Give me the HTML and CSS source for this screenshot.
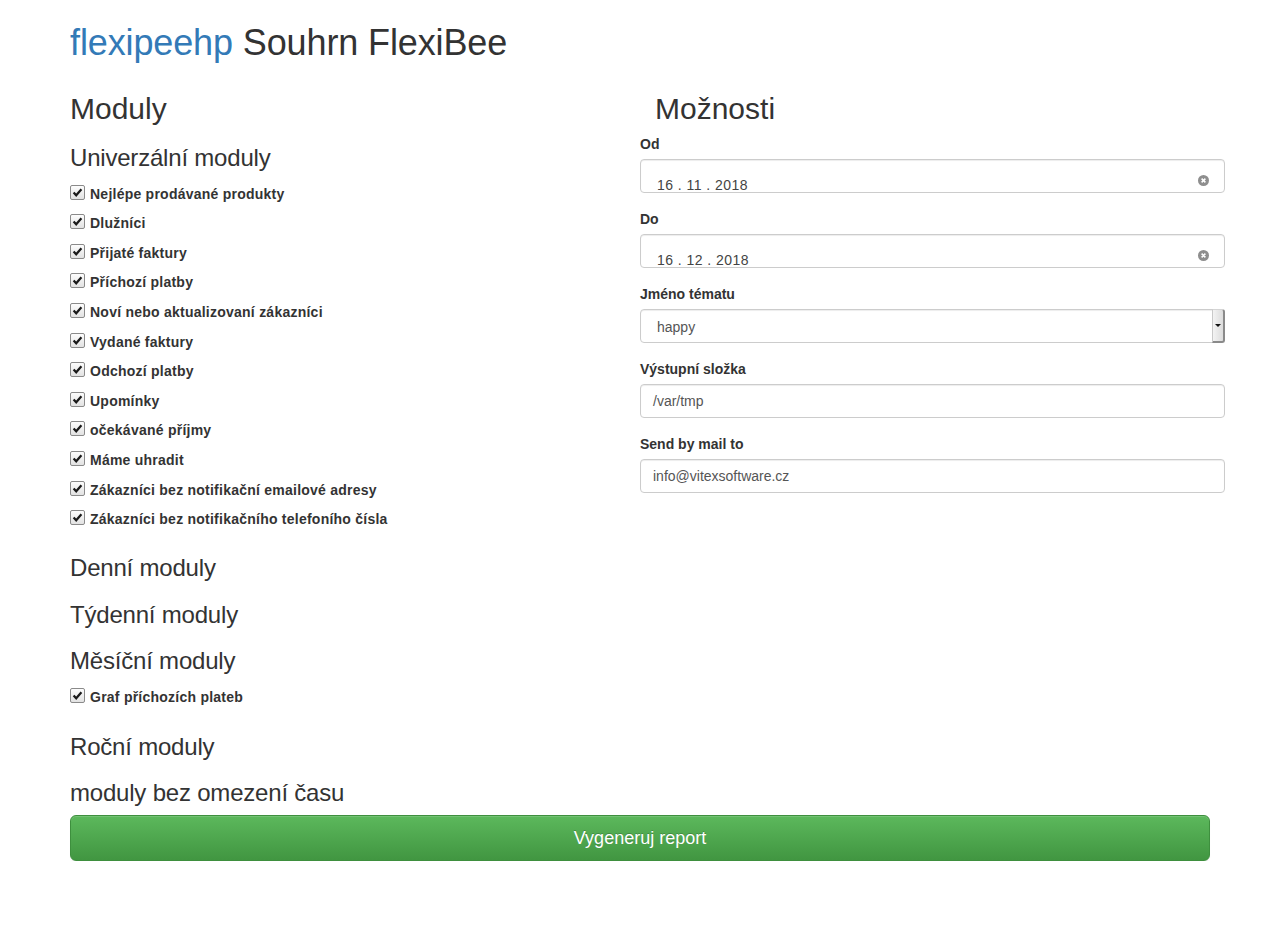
FILE: index.html
```html
<!DOCTYPE html>
<html lang="cs">
<head>
<meta charset="utf-8">
<title>flexipeehp Souhrn FlexiBee</title>
<link rel="stylesheet" href="styles.css">
</head>
<body>
<div class="container">
  <h1 class="title"><span class="brand">flexipeehp</span> Souhrn FlexiBee</h1>
  <div class="row">
    <div class="col">
      <h2>Moduly</h2>
      <h3>Univerzální moduly</h3>
      <div class="mods mods-main">
        <div class="mod"><span class="cb"><svg viewBox="0 0 13 13" width="13" height="13"><path d="M2.6 6.4 L5.2 9.3 L10.4 3.2" fill="none" stroke="#1a1a1a" stroke-width="2.2"/></svg></span><span class="lbl">Nejlépe prodávané produkty</span></div>
        <div class="mod"><span class="cb"><svg viewBox="0 0 13 13" width="13" height="13"><path d="M2.6 6.4 L5.2 9.3 L10.4 3.2" fill="none" stroke="#1a1a1a" stroke-width="2.2"/></svg></span><span class="lbl">Dlužníci</span></div>
        <div class="mod"><span class="cb"><svg viewBox="0 0 13 13" width="13" height="13"><path d="M2.6 6.4 L5.2 9.3 L10.4 3.2" fill="none" stroke="#1a1a1a" stroke-width="2.2"/></svg></span><span class="lbl">Přijaté faktury</span></div>
        <div class="mod"><span class="cb"><svg viewBox="0 0 13 13" width="13" height="13"><path d="M2.6 6.4 L5.2 9.3 L10.4 3.2" fill="none" stroke="#1a1a1a" stroke-width="2.2"/></svg></span><span class="lbl">Příchozí platby</span></div>
        <div class="mod"><span class="cb"><svg viewBox="0 0 13 13" width="13" height="13"><path d="M2.6 6.4 L5.2 9.3 L10.4 3.2" fill="none" stroke="#1a1a1a" stroke-width="2.2"/></svg></span><span class="lbl">Noví nebo aktualizovaní zákazníci</span></div>
        <div class="mod"><span class="cb"><svg viewBox="0 0 13 13" width="13" height="13"><path d="M2.6 6.4 L5.2 9.3 L10.4 3.2" fill="none" stroke="#1a1a1a" stroke-width="2.2"/></svg></span><span class="lbl">Vydané faktury</span></div>
        <div class="mod"><span class="cb"><svg viewBox="0 0 13 13" width="13" height="13"><path d="M2.6 6.4 L5.2 9.3 L10.4 3.2" fill="none" stroke="#1a1a1a" stroke-width="2.2"/></svg></span><span class="lbl">Odchozí platby</span></div>
        <div class="mod"><span class="cb"><svg viewBox="0 0 13 13" width="13" height="13"><path d="M2.6 6.4 L5.2 9.3 L10.4 3.2" fill="none" stroke="#1a1a1a" stroke-width="2.2"/></svg></span><span class="lbl">Upomínky</span></div>
        <div class="mod"><span class="cb"><svg viewBox="0 0 13 13" width="13" height="13"><path d="M2.6 6.4 L5.2 9.3 L10.4 3.2" fill="none" stroke="#1a1a1a" stroke-width="2.2"/></svg></span><span class="lbl">očekávané příjmy</span></div>
        <div class="mod"><span class="cb"><svg viewBox="0 0 13 13" width="13" height="13"><path d="M2.6 6.4 L5.2 9.3 L10.4 3.2" fill="none" stroke="#1a1a1a" stroke-width="2.2"/></svg></span><span class="lbl">Máme uhradit</span></div>
        <div class="mod"><span class="cb"><svg viewBox="0 0 13 13" width="13" height="13"><path d="M2.6 6.4 L5.2 9.3 L10.4 3.2" fill="none" stroke="#1a1a1a" stroke-width="2.2"/></svg></span><span class="lbl">Zákazníci bez notifikační emailové adresy</span></div>
        <div class="mod"><span class="cb"><svg viewBox="0 0 13 13" width="13" height="13"><path d="M2.6 6.4 L5.2 9.3 L10.4 3.2" fill="none" stroke="#1a1a1a" stroke-width="2.2"/></svg></span><span class="lbl">Zákazníci bez notifikačního telefoního čísla</span></div>
      </div>
      <h3>Denní moduly</h3>
      <h3>Týdenní moduly</h3>
      <h3>Měsíční moduly</h3>
      <div class="mods">
        <div class="mod mod-tight"><span class="cb"><svg viewBox="0 0 13 13" width="13" height="13"><path d="M2.6 6.4 L5.2 9.3 L10.4 3.2" fill="none" stroke="#1a1a1a" stroke-width="2.2"/></svg></span><span class="lbl">Graf příchozích plateb</span></div>
      </div>
      <h3>Roční moduly</h3>
      <h3 class="tail">moduly bez omezení času</h3>
    </div>
    <div class="col">
      <h2>Možnosti</h2>
      <form class="opts">
        <div class="form-group">
          <label>Od</label>
          <div class="form-control date"><span class="dval">16 . 11 . 2018</span><svg class="clear" viewBox="0 0 11 11" width="11" height="11"><circle cx="5.5" cy="5.5" r="5.5" fill="#8e8e8e"/><path d="M3.6 3.6 L7.4 7.4 M7.4 3.6 L3.6 7.4" stroke="#fff" stroke-width="1.5"/></svg></div>
        </div>
        <div class="form-group">
          <label>Do</label>
          <div class="form-control date"><span class="dval">16 . 12 . 2018</span><svg class="clear" viewBox="0 0 11 11" width="11" height="11"><circle cx="5.5" cy="5.5" r="5.5" fill="#8e8e8e"/><path d="M3.6 3.6 L7.4 7.4 M7.4 3.6 L3.6 7.4" stroke="#fff" stroke-width="1.5"/></svg></div>
        </div>
        <div class="form-group">
          <label>Jméno tématu</label>
          <div class="form-control select"><span class="sval">happy</span><span class="arrow"><span class="tri"></span></span></div>
        </div>
        <div class="form-group">
          <label>Výstupní složka</label>
          <div class="form-control">/var/tmp</div>
        </div>
        <div class="form-group">
          <label>Send by mail to</label>
          <div class="form-control">info@vitexsoftware.cz</div>
        </div>
      </form>
    </div>
  </div>
  <button class="btn-go" type="button">Vygeneruj report</button>
</div>
</body>
</html>
```

FILE: styles.css
```css
html, body {
  margin: 0;
  padding: 0;
  background: #fff;
}
body {
  font-family: "Liberation Sans", Arial, Helvetica, sans-serif;
  font-size: 14px;
  line-height: 20px;
  color: #333;
}
.container {
  width: 1140px;
  margin: 0 auto;
}
h1, h2, h3 {
  font-weight: normal;
  line-height: 1.1;
  color: #333;
}
.title {
  font-size: 36px;
  margin: 23px 0 10px;
  letter-spacing: -0.12px;
}
.brand {
  color: #337ab7;
}
.row {
  display: grid;
  grid-template-columns: 555px 555px;
  column-gap: 30px;
}
.col {
  display: block;
  min-width: 0;
}
h2 {
  font-size: 30px;
  margin: 19px 0 10px;
}
h3 {
  font-size: 24px;
  margin: 20px 0 10px;
  letter-spacing: -0.2px;
}
h3.tail {
  margin-bottom: 8px;
}
.mods {
  margin: 0;
}
.mods-main {
  margin-bottom: -1px;
}
.mod {
  box-sizing: border-box;
  height: 29.6px;
  padding-top: 2.6px;
  line-height: 20px;
  font-weight: bold;
  white-space: nowrap;
  letter-spacing: 0.24px;
}
.mod-tight {
  padding-top: 3.2px;
}
.cb {
  display: inline-block;
  box-sizing: border-box;
  width: 15px;
  height: 15px;
  margin: 0 5px 0 0;
  vertical-align: -1px;
  border: 1px solid #8a8a8a;
  border-radius: 2px;
  background: linear-gradient(to bottom, #fdfdfd 0%, #e2e2e2 100%);
  position: relative;
}
.cb svg {
  position: absolute;
  left: 0;
  top: 0;
}
.opts {
  margin: -1px -15px 0;
}
.form-group {
  margin-bottom: 16px;
}
label {
  display: inline-block;
  font-weight: bold;
  margin-bottom: 5px;
}
.form-control {
  box-sizing: border-box;
  height: 34px;
  padding: 6px 12px;
  font-size: 14px;
  line-height: 20px;
  color: #555;
  background: #fff;
  border: 1px solid #ccc;
  border-radius: 4px;
  box-shadow: inset 0 1px 1px rgba(0, 0, 0, .075);
}
.form-control.date {
  display: flex;
  align-items: flex-end;
  padding: 0 15px 0 16px;
}
.dval {
  line-height: 16px;
  letter-spacing: 0.45px;
  color: #444;
  flex: 1;
  position: relative;
  top: 1px;
}
.clear {
  align-self: flex-end;
  margin-bottom: 6px;
}
.form-control.select {
  display: flex;
  align-items: center;
  padding: 0 0 0 16px;
}
.sval {
  flex: 1;
  position: relative;
  top: 1px;
}
.arrow {
  box-sizing: border-box;
  align-self: stretch;
  width: 13px;
  margin: -1px -1px -1px 0;
  border-left: 1px solid #c9c9c9;
  border-right: 2px solid #8a8a8a;
  border-bottom: 2px solid #8a8a8a;
  border-top: 1px solid #d4d4d4;
  border-radius: 0 3px 3px 0;
  background: linear-gradient(to right, #f3f3f3 0%, #dcdcdc 100%);
  display: flex;
  align-items: center;
  justify-content: center;
}
.tri {
  width: 0;
  height: 0;
  border-left: 3px solid transparent;
  border-right: 3px solid transparent;
  border-top: 3px solid #111;
  margin-top: 1px;
}
.btn-go {
  display: block;
  box-sizing: border-box;
  width: 100%;
  height: 46px;
  padding: 10px 16px;
  font-family: "Liberation Sans", Arial, Helvetica, sans-serif;
  font-size: 18px;
  line-height: 24px;
  color: #fff;
  text-shadow: 0 -1px 0 rgba(0, 0, 0, .2);
  background: linear-gradient(to bottom, #5cb85c 0%, #419641 100%);
  border: 1px solid #3e8f3e;
  border-radius: 6px;
  box-shadow: inset 0 1px 0 rgba(255, 255, 255, .15), 0 1px 1px rgba(0, 0, 0, .075);
  cursor: pointer;
}
```
